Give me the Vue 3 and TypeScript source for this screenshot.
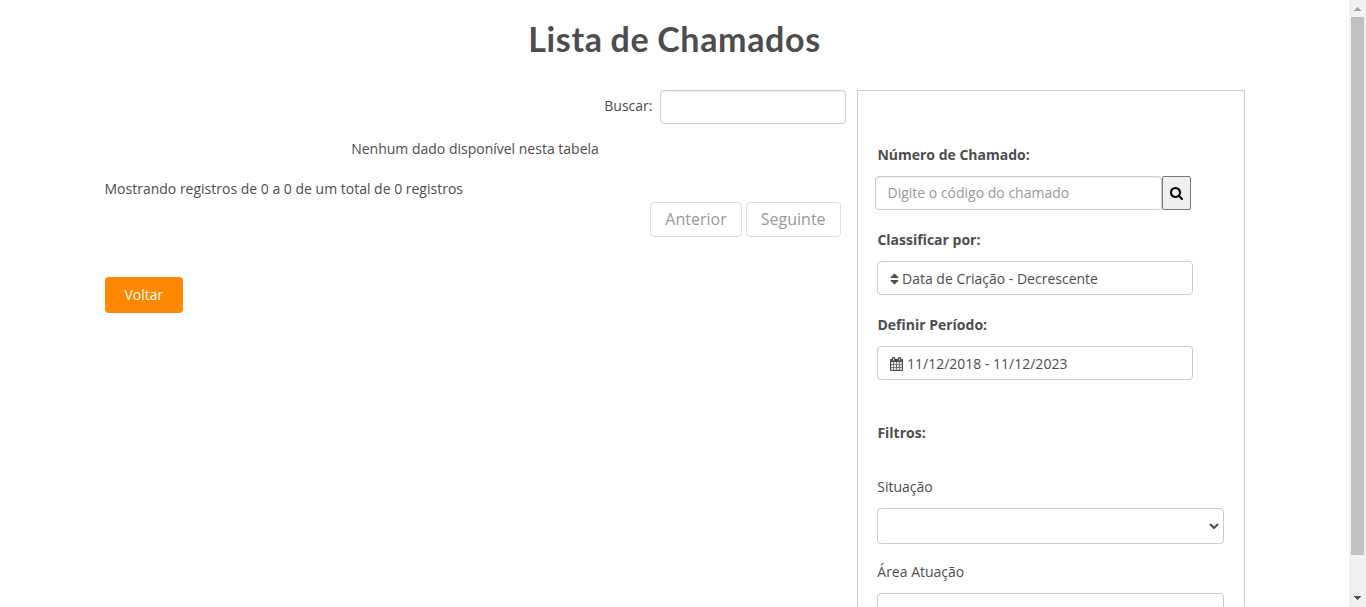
<script setup lang="ts">
import { ref } from 'vue'

const search = ref<string>('')
const ticket = ref<string>('')
const selects: string[] = ['Situação', 'Área Atuação']
</script>

<template>
  <div class="viewport">
    <main class="page">
      <h1 class="title">Lista de Chamados</h1>
      <div class="columns">
        <section class="list">
          <label class="search"><span>Buscar:</span><input v-model="search" class="field" type="text" /></label>
          <p class="empty"><span>Nenhum dado disponível nesta tabela</span></p>
          <p class="info"><span>Mostrando registros de 0 a 0 de um total de 0 registros</span></p>
          <nav class="pager">
            <button class="prev" type="button"><span>Anterior</span></button>
            <button class="next" type="button"><span>Seguinte</span></button>
          </nav>
          <button class="back" type="button"><span>Voltar</span></button>
        </section>

        <aside class="panel">
          <h2 class="label number"><span>Número de Chamado:</span></h2>
          <div class="lookup">
            <input v-model="ticket" class="field" type="text" placeholder="Digite o código do chamado" />
            <button type="button" aria-label="Buscar">
              <svg width="13" height="14" viewBox="0 0 1664 1792"><path d="M1152 832q0-185-131.500-316.500t-316.500-131.500-316.500 131.500-131.500 316.500 131.500 316.500 316.500 131.500 316.500-131.500 131.500-316.500zm512 832q0 52-38 90t-90 38q-54 0-90-38l-343-342q-179 124-399 124-143 0-273.500-55.500t-225-150-150-225-55.500-273.500 55.500-273.500 150-225 225-150 273.500-55.500 273.500 55.500 225 150 150 225 55.500 273.500q0 220-124 399l343 343q37 37 37 90z" /></svg>
            </button>
          </div>
          <h2 class="label"><span>Classificar por:</span></h2>
          <div class="choice">
            <svg class="sort" width="8" height="14" viewBox="0 0 1024 1792"><path d="M1024 1088q0 26-19 45l-448 448q-19 19-45 19t-45-19l-448-448q-19-19-19-45t19-45 45-19h896q26 0 45 19t19 45zm0-384q0 26-19 45t-45 19h-896q-26 0-45-19t-19-45 19-45l448-448q19-19 45-19t45 19l448 448q19 19 19 45z" /></svg>
            <span>Data de Criação - Decrescente</span>
          </div>
          <h2 class="label"><span>Definir Período:</span></h2>
          <div class="choice">
            <svg class="calendar" width="13" height="14" viewBox="0 0 1664 1792"><path d="M128 1664h288v-288h-288v288zm352 0h320v-288h-320v288zm-352-352h288v-320h-288v320zm352 0h320v-320h-320v320zm-352-384h288v-288h-288v288zm736 736h320v-288h-320v288zm-384-736h320v-288h-320v288zm768 736h288v-288h-288v288zm-384-352h320v-320h-320v320zm-352-864v-288q0-13-9.500-22.500t-22.500-9.500h-64q-13 0-22.500 9.500t-9.500 22.500v288q0 13 9.500 22.500t22.500 9.500h64q13 0 22.500-9.500t9.500-22.500zm736 864h288v-320h-288v320zm-384-384h320v-288h-320v288zm384 0h288v-288h-288v288zm32-480v-288q0-13-9.500-22.500t-22.500-9.500h-64q-13 0-22.500 9.500t-9.500 22.500v288q0 13 9.500 22.500t22.500 9.500h64q13 0 22.500-9.500t9.500-22.500zm384-64v1280q0 52-38 90t-90 38h-1408q-52 0-90-38t-38-90v-1280q0-52 38-90t90-38h128v-96q0-66 47-113t113-47h64q66 0 113 47t47 113v96h384v-96q0-66 47-113t113-47h64q66 0 113 47t47 113v96h128q52 0 90 38t38 90z" /></svg>
            <span>11/12/2018 - 11/12/2023</span>
          </div>
          <h2 class="label filters"><span>Filtros:</span></h2>
          <template v-for="name in selects" :key="name">
            <p class="select-label"><span>{{ name }}</span></p>
            <div class="select">
              <svg width="10" height="6" viewBox="0 0 10 6"><path d="M1 1l4 4 4-4" /></svg>
            </div>
          </template>
        </aside>
      </div>
    </main>
    <div class="scrollbar">
      <svg width="7" height="4" viewBox="0 0 7 4"><path class="up" d="M3 0h1v1h1v1h1v1h1v1H0V3h1V2h1V1h1z" /></svg>
      <div class="thumb"></div>
      <svg class="arrow-down" width="7" height="4" viewBox="0 0 7 4"><path class="down" d="M0 0h7v1H6v1H5v1H4v1H3V3H2V2H1V1H0z" /></svg>
    </div>
  </div>
</template>

<style>
body { margin: 0; overflow: hidden; background: #fff; }
</style>

<style scoped>
* { box-sizing: border-box; }
.viewport { display: flex; height: 607px; overflow: hidden; color: #4d4d4d; font: 14px/20px "Open Sans", sans-serif; }
.page { flex: 1; height: 607px; overflow: hidden; }
button, input { margin: 0; font: inherit; color: inherit; }
p, h1, h2 { margin: 0; }
.title { height: 90px; padding-top: 15px; font: 700 34px/48px Lato, "Open Sans", sans-serif; letter-spacing: .65px; word-spacing: -1px; text-align: center; }
.columns { display: flex; width: 1140px; margin-left: 105px; align-items: flex-start; }
.list { width: 741px; margin-right: 11px; }
.field { height: 34px; padding: 6px 12px; border: 1px solid #ccc; border-radius: 4px; background: #fff; outline: 0; box-shadow: inset 0 1px 1px rgba(0, 0, 0, .075); }
.search { display: flex; justify-content: flex-end; gap: 7.5px; line-height: 32px; }
.search .field { width: 186px; }
.empty { margin: 15px 1px 0 0; text-align: center; }
.info { margin: 20px 0 0 -.5px; }
.pager { display: flex; justify-content: flex-end; gap: 4px; margin: 3px 5px 0 0; }
.pager button { height: 35px; padding: 0; border: 1px solid #ddd; border-radius: 4px; background: #fff; color: #999; font-size: 16px; line-height: 31px; }
.pager .prev { width: 92px; }
.pager .next { width: 95px; padding-right: .6px; }
.back { display: block; width: 78px; height: 36px; margin-top: 40px; padding: 0 .4px 0 0; border: 0; border-radius: 4px; background: #ff8800; color: #fff; }
.panel { width: 388px; height: 700px; padding: 0 20px 0 19px; border: 1px solid #ccc; }
.label { margin: 20px 0 0 .4px; font-size: 14px; line-height: 20px; font-weight: 700; }
.label.number { margin-top: 54px; }
.label.filters { margin-top: 43px; }
.lookup { display: flex; margin: 11px 0 0 -2px; }
.lookup .field { width: 287px; padding: 5px 12px 7px 11.5px; line-height: 20px; }
.lookup .field::placeholder { color: #999; opacity: 1; }
.lookup button { display: flex; width: 29px; height: 34px; padding: 0; align-items: center; justify-content: center; border: 1px solid #767676; border-radius: 2px; background: #efefef; color: #000; }
svg { display: block; fill: currentColor; }
.choice { display: flex; width: 316px; height: 34px; margin-top: 11px; padding: 1px 12px 0; align-items: center; border: 1px solid #ccc; border-radius: 4px; }
.sort { width: 9px; margin-right: 3px; }
.calendar { margin-right: 4px; stroke: currentColor; stroke-width: 35; }
.select-label { margin: 34px 0 0 .3px; }
.select + .select-label { margin-top: 18px; }
.select { display: flex; width: 347px; height: 36px; margin-top: 11px; padding-right: 4px; align-items: center; justify-content: flex-end; border: 1px solid #ccc; border-radius: 4px; }
.select path { fill: none; stroke: #4d4d4d; stroke-width: 2; }
.scrollbar { display: flex; width: 17px; height: 607px; padding: 7px 2px; flex-direction: column; align-items: center; background: #f1f1f1; }
.thumb { width: 13px; height: 538px; margin-top: 6px; background: #c1c1c1; }
.arrow-down { margin-top: 41px; }
.up { fill: #a3a3a3; }
.down { fill: #505050; }
</style>
